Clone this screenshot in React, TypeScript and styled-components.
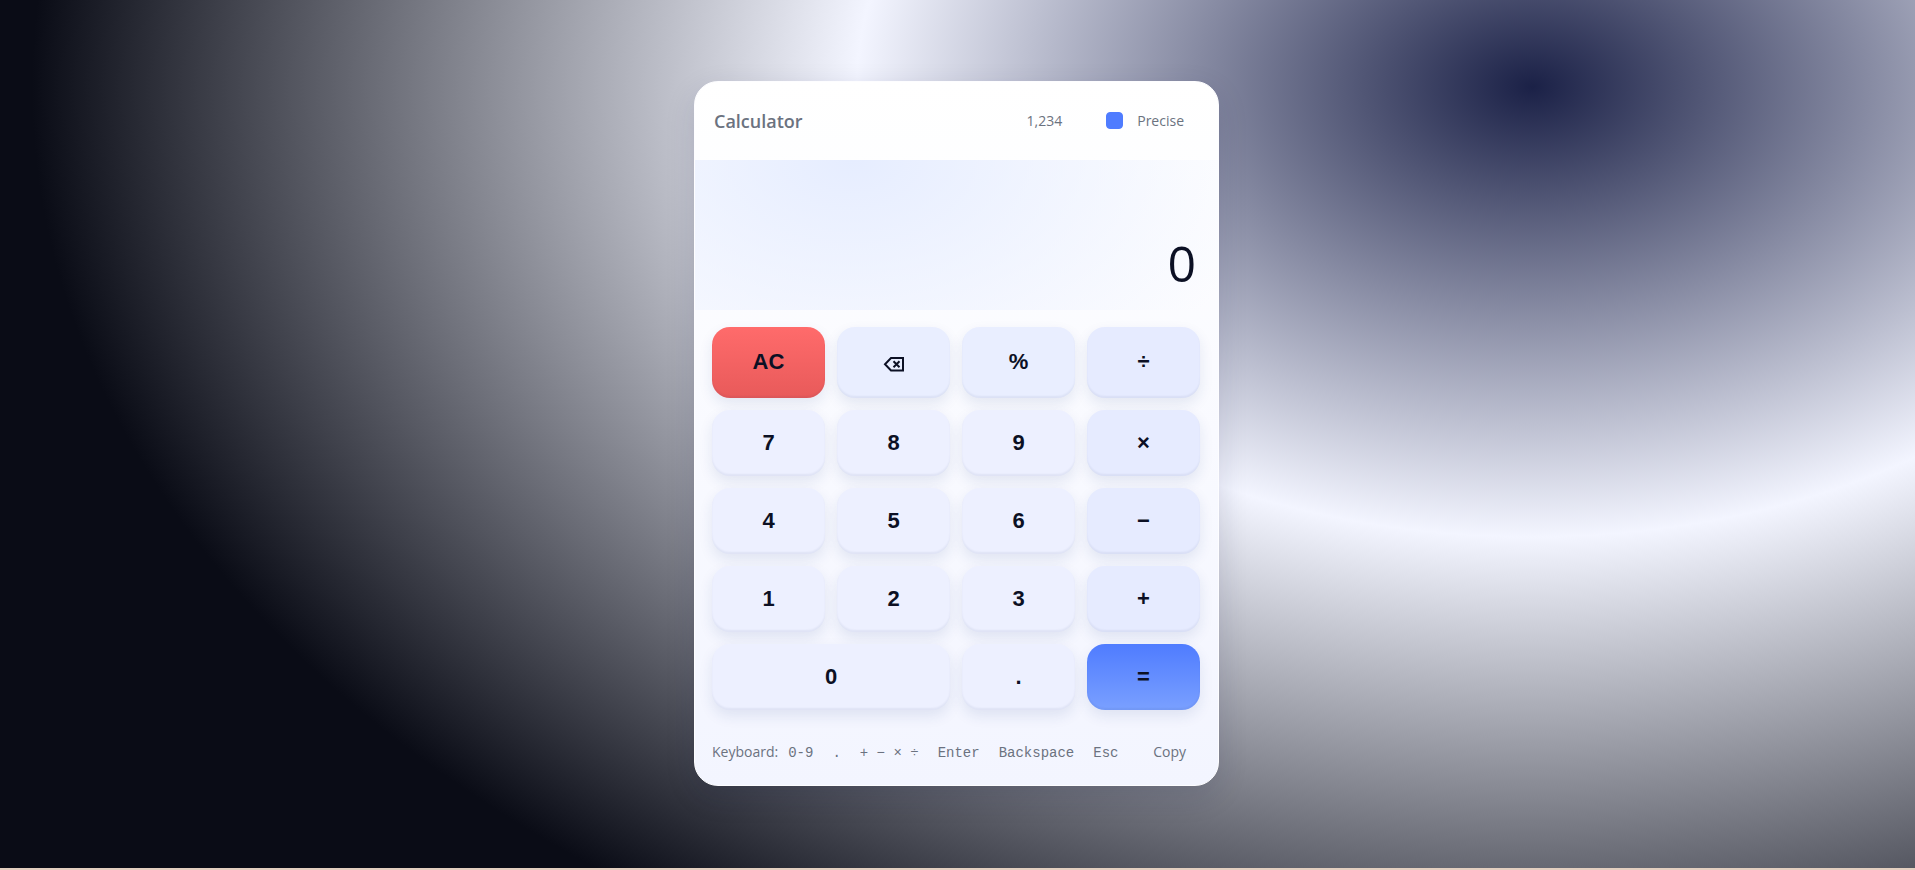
import React, { useState } from "react";
import styled, { createGlobalStyle, css } from "styled-components";

const GlobalStyle = createGlobalStyle`
  *, *::before, *::after { box-sizing: border-box; }
  body {
    margin: 0;
    color: #0c1024;
    font-family: "Open Sans", "Noto Sans", sans-serif;
  }
`;

const Page = styled.main`
  min-height: 100vh;
  display: grid;
  place-items: center;
  padding: 24px 26px 26px 24px;
  border-bottom: 2px solid #e3cfc0;
  background: radial-gradient(1500px 1000px at 80% 10%, #1b2147 0%, #f3f5ff 45%, #0a0c16 100%);
`;

const Card = styled.section`
  width: 100%;
  max-width: 525px;
  overflow: hidden;
  border: 1px solid #fdfdff;
  border-radius: 24px;
  background: linear-gradient(180deg, #ffffff, #f3f5ff);
  box-shadow: 0 10px 30px rgba(20, 30, 70, 0.14);
`;

const Header = styled.header`
  display: flex;
  align-items: center;
  justify-content: space-between;
  height: 78px;
  padding: 0 34px 0 19px;
`;

const Title = styled.h1`
  margin: 0;
  font-size: 18px;
  line-height: 24px;
  font-weight: 600;
  color: #6b7280;
`;

const Options = styled.div`
  display: flex;
  align-items: center;
  gap: 44px;
`;

const TextButton = styled.button`
  padding: 0;
  border: 0;
  background: none;
  font: inherit;
  font-size: 14px;
  line-height: 20px;
  color: #6b7280;
  cursor: pointer;
`;

const Toggle = styled.label`
  display: flex;
  align-items: center;
  gap: 14px;
  font-size: 14px;
  line-height: 20px;
  color: #6b7280;
  cursor: pointer;
`;

const Tick = styled.input`
  appearance: none;
  width: 17px;
  height: 17px;
  margin: 0;
  border: 1px solid #4f7cff;
  border-radius: 4px;
  background: #ffffff;
  &:checked { background: #4f7cff; }
`;

const Display = styled.div`
  display: flex;
  align-items: flex-end;
  justify-content: flex-end;
  height: 150px;
  padding: 0 22px 13px;
  background: radial-gradient(80% 180% at 30% 0%, #e6edff 0%, rgba(230, 237, 255, 0) 100%);
`;

const Result = styled.output`
  font-size: 50px;
  line-height: 68px;
  font-weight: 400;
`;

const Keys = styled.div`
  display: grid;
  grid-template-columns: repeat(4, 1fr);
  grid-template-rows: 71px;
  grid-auto-rows: 66px;
  gap: 12px;
  padding: 17px 18px 0 17px;
`;

type Tone = "digit" | "tool" | "operator" | "clear" | "equals";

const tones = {
  digit: css`background: #edf0ff;`,
  tool: css`background: #e9eeff;`,
  operator: css`background: #e6ebff;`,
  clear: css`background: linear-gradient(180deg, #ff6b6b, #e85a5a);`,
  equals: css`background: linear-gradient(180deg, #4f7cff, #7aa0ff);`,
};

const Key = styled.button<{ $tone: Tone; $wide?: boolean }>`
  display: flex;
  align-items: center;
  justify-content: center;
  padding: 0;
  border: 0;
  border-radius: 18px;
  color: #0c1024;
  font-family: "Liberation Sans", Arial, sans-serif;
  font-size: 22px;
  font-weight: 700;
  cursor: pointer;
  box-shadow: 0 6px 14px rgba(30, 60, 130, 0.1), inset 0 -2px 2px rgba(20, 40, 90, 0.06);
  ${({ $tone }) => tones[$tone]}
  ${({ $wide }) => $wide && css`grid-column: span 2;`}
`;

const Footer = styled.footer`
  display: flex;
  align-items: center;
  justify-content: space-between;
  padding: 32px 32px 22px 17px;
  font-size: 14px;
  line-height: 20px;
  color: #6b7280;
`;

const Hints = styled.div`
  display: flex;
  align-items: baseline;
  gap: 19px;
`;

const HintLabel = styled.span`
  margin-right: -9px;
`;

const Kbd = styled.kbd`
  font-family: "Liberation Mono", monospace;
  font-size: 14px;
  white-space: nowrap;
`;

const BackspaceIcon = () => (
  <svg width="22" height="22" viewBox="0 0 22 22" fill="none" stroke="currentColor" strokeWidth="2" aria-hidden="true">
    <path d="M8 7H20V19.500H8L2 13.250Z" />
    <path d="M10.500 10.250L16.500 16.250M16.500 10.250L10.500 16.250" />
  </svg>
);

const keys: { label: string; tone: Tone; wide?: boolean }[] = [
  { label: "AC", tone: "clear" },
  { label: "⌫", tone: "tool" },
  { label: "%", tone: "tool" },
  { label: "÷", tone: "operator" },
  { label: "7", tone: "digit" },
  { label: "8", tone: "digit" },
  { label: "9", tone: "digit" },
  { label: "×", tone: "operator" },
  { label: "4", tone: "digit" },
  { label: "5", tone: "digit" },
  { label: "6", tone: "digit" },
  { label: "−", tone: "operator" },
  { label: "1", tone: "digit" },
  { label: "2", tone: "digit" },
  { label: "3", tone: "digit" },
  { label: "+", tone: "operator" },
  { label: "0", tone: "digit", wide: true },
  { label: ".", tone: "digit" },
  { label: "=", tone: "equals" },
];

const hints = ["0-9", ".", "+ − × ÷", "Enter", "Backspace", "Esc"];

export default function App() {
  const [precise, setPrecise] = useState(true);
  return (
    <>
      <GlobalStyle />
      <Page>
        <Card aria-label="Calculator">
          <Header>
            <Title>Calculator</Title>
            <Options>
              <TextButton type="button">1,234</TextButton>
              <Toggle htmlFor="precise">
                <Tick id="precise" type="checkbox" checked={precise} onChange={(e) => setPrecise(e.target.checked)} />
                Precise
              </Toggle>
            </Options>
          </Header>
          <Display>
            <Result>0</Result>
          </Display>
          <Keys>
            {keys.map(({ label, tone, wide }) => (
              <Key key={label} type="button" $tone={tone} $wide={wide} aria-label={label === "⌫" ? "Backspace" : undefined}>
                {label === "⌫" ? <BackspaceIcon /> : label}
              </Key>
            ))}
          </Keys>
          <Footer>
            <Hints>
              <HintLabel>Keyboard:</HintLabel>
              {hints.map((hint) => (
                <Kbd key={hint}>{hint}</Kbd>
              ))}
            </Hints>
            <TextButton type="button">Copy</TextButton>
          </Footer>
        </Card>
      </Page>
    </>
  );
}
